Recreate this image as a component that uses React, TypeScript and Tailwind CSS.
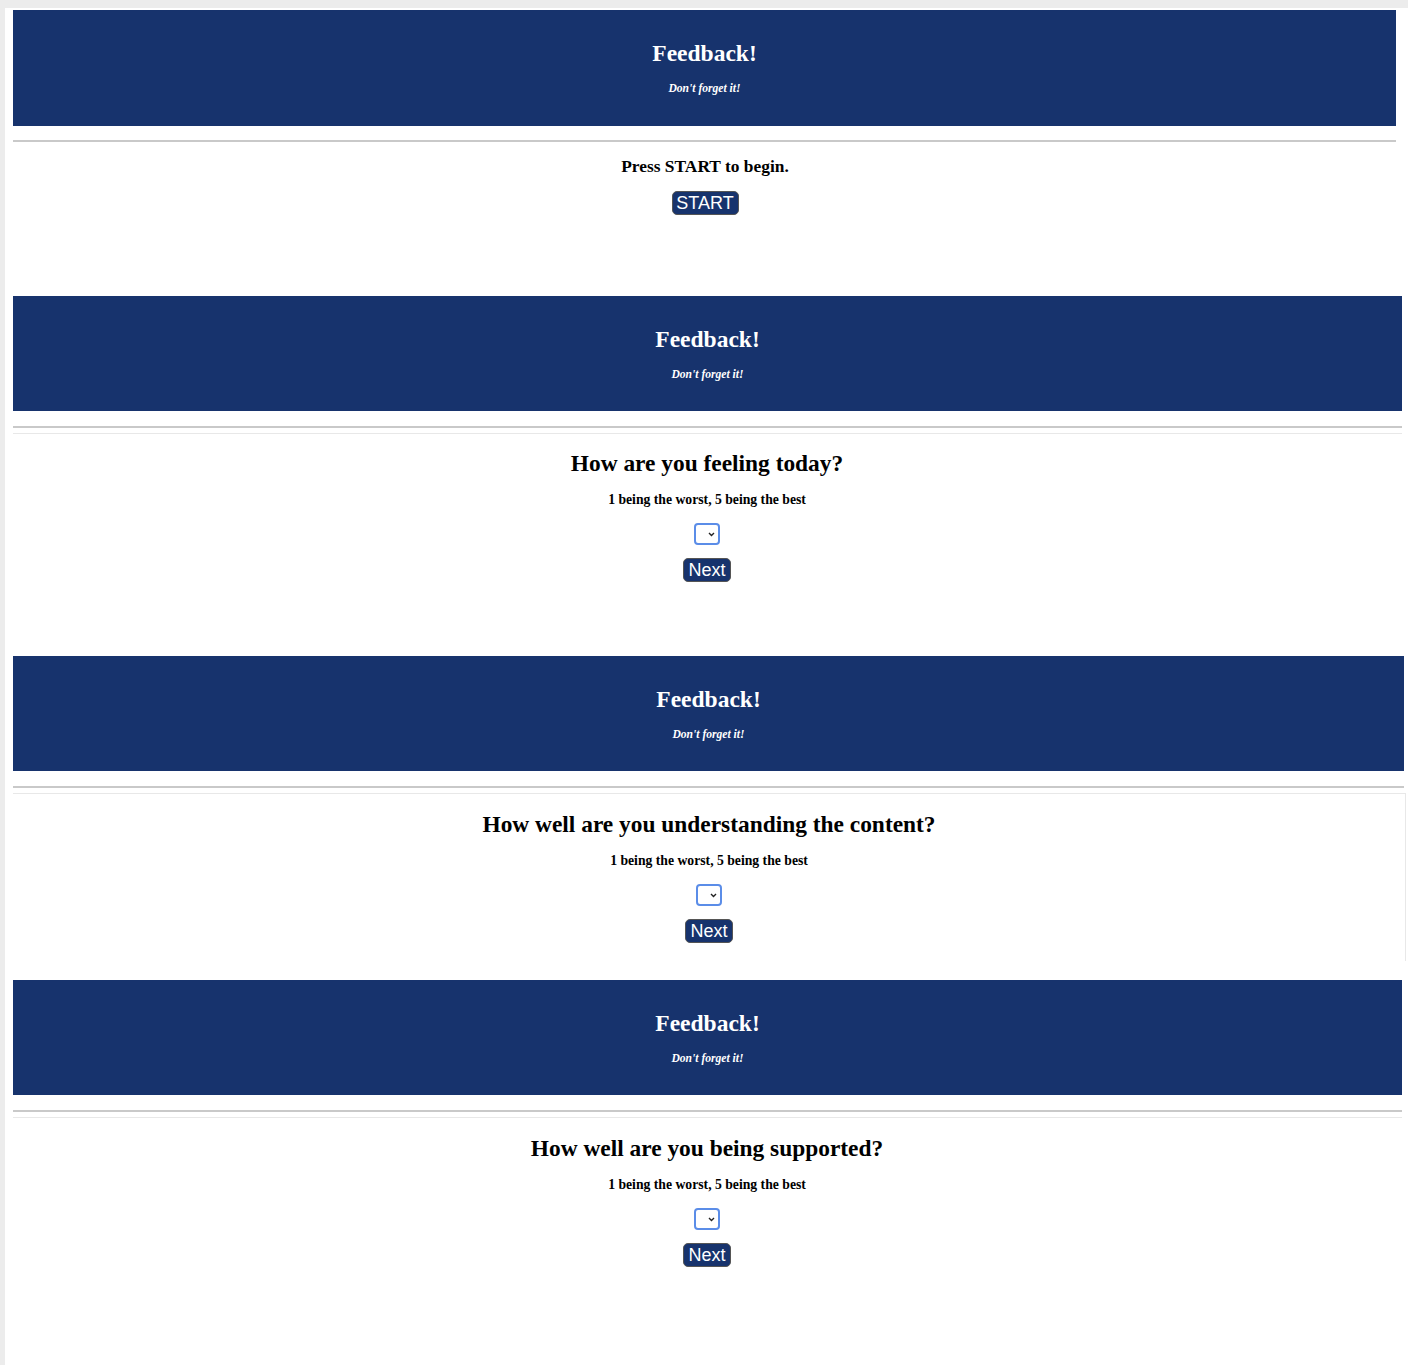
import React from "react";

const serif = { fontFamily: '"Liberation Serif", "Times New Roman", serif' };

function Header({ width }: { width: string }) {
  return (
    <div className={`ml-2 ${width} h-[115px] bg-[#17336d] flex flex-col items-center pt-[29px] text-white`}>
      <h1 className="text-[23.5px] leading-[28px] font-bold">Feedback!</h1>
      <p className="mt-[15px] text-[11.6px] leading-[14px] font-bold italic">Don't forget it!</p>
    </div>
  );
}

function BlueButton({ label, w }: { label: string; w: string }) {
  return (
    <button
      className={`${w} h-[24px] rounded-[5px] border border-[#555] bg-[#17336d] text-white text-[18px] leading-[20px]`}
      style={{ fontFamily: '"Liberation Sans", Arial, sans-serif' }}
    >
      {label}
    </button>
  );
}

function Select() {
  return (
    <div className="w-[26px] h-[22px] rounded-[4px] border-2 border-[#5b8de8] bg-white flex items-center justify-end pr-[3px]">
      <svg width="7" height="5" viewBox="0 0 7 5">
        <path d="M1 1l2.5 2.5L6 1" stroke="#222" strokeWidth="1.4" fill="none" />
      </svg>
    </div>
  );
}

function Question({ title }: { title: string }) {
  return (
    <div className="flex flex-col items-center text-black">
      <h2 className="text-[23.4px] leading-[28px] font-bold">{title}</h2>
      <p className="mt-[15px] text-[13.7px] leading-[16px] font-bold">1 being the worst, 5 being the best</p>
      <div className="mt-[15px]">
        <Select />
      </div>
      <div className="mt-[13px]">
        <BlueButton label="Next" w="w-[48px]" />
      </div>
    </div>
  );
}

export default function App() {
  return (
    <div className="min-h-[1365px] bg-[#ececec] pt-2 pl-[5px]" style={serif}>
      <div className="bg-white min-h-[1357px]">
        {/* start screen */}
        <div className="h-[288px] pt-[2px]">
          <div className="ml-2 w-[1383px] h-[116px] bg-[#17336d] flex flex-col items-center pt-[29px] text-white">
            <h1 className="text-[23.5px] leading-[28px] font-bold">Feedback!</h1>
            <p className="mt-[15px] text-[11.6px] leading-[14px] font-bold italic">Don't forget it!</p>
          </div>
          <div className="ml-2 w-[1383px] mt-[14px] h-[2px] bg-[#c9c9c9]" />
          <div className="flex flex-col items-center w-[1400px]">
            <p className="mt-[13px] text-[17.4px] leading-[22px] font-bold">Press START to begin.</p>
            <div className="mt-[14px]">
              <BlueButton label="START" w="w-[67px]" />
            </div>
          </div>
        </div>

        {/* question 1 */}
        <div className="h-[360px]">
          <Header width="w-[1389px]" />
          <div className="ml-2 w-[1389px] mt-[15px] h-[2px] bg-[#c9c9c9]" />
          <div className="ml-2 w-[1389px] mt-[5px] h-px bg-[#e8e8e8]" />
          <div className="w-[1404px] pt-[15px]">
            <Question title="How are you feeling today?" />
          </div>
        </div>

        {/* question 2 */}
        <div className="h-[324px]">
          <div className="ml-2 w-[1391px] h-[115px] bg-[#17336d] flex flex-col items-center pt-[29px] text-white">
            <h1 className="text-[23.5px] leading-[28px] font-bold">Feedback!</h1>
            <p className="mt-[15px] text-[11.6px] leading-[14px] font-bold italic">Don't forget it!</p>
          </div>
          <div className="ml-2 w-[1391px] mt-[15px] h-[2px] bg-[#c9c9c9]" />
          <div className="ml-2 w-[1393px] mt-[5px] h-[168px] border-t border-r border-[#e8e8e8] pt-[16px]">
            <Question title="How well are you understanding the content?" />
          </div>
        </div>

        {/* question 3 */}
        <div>
          <Header width="w-[1389px]" />
          <div className="ml-2 w-[1389px] mt-[15px] h-[2px] bg-[#c9c9c9]" />
          <div className="ml-2 w-[1389px] mt-[5px] h-px bg-[#e8e8e8]" />
          <div className="w-[1404px] pt-[16px]">
            <Question title="How well are you being supported?" />
          </div>
        </div>
      </div>
    </div>
  );
}
